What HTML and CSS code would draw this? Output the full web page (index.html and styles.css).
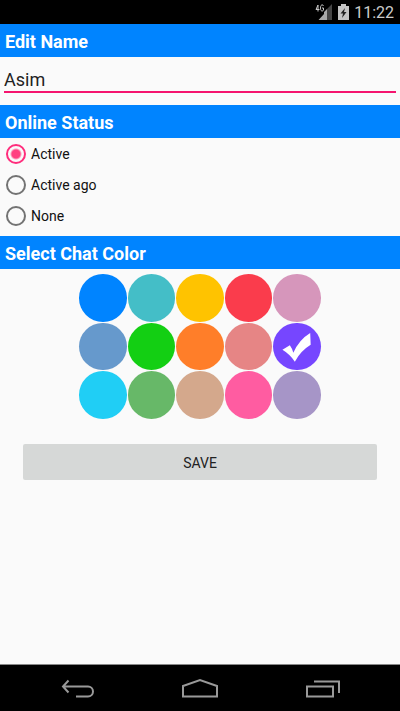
FILE: index.html
```html
<!DOCTYPE html>
<html lang="en">
<head>
<meta charset="utf-8">
<meta name="viewport" content="width=device-width, initial-scale=1">
<title>Chat settings</title>
<link rel="stylesheet" href="styles.css">
</head>
<body>
<header class="status-bar">
  <svg class="signal" width="18" height="16" viewBox="0 0 18 16" role="img" aria-label="4G signal">
    <path d="M17 0V16H12V5Z" fill="#454545"/>
    <path d="M12 5V16H3.500L9 10V8Z" fill="#a8a8a8"/>
    <path d="M3 7.500V1L1 5.500H4.500M8.500 2C8 .3 5.500.2 5.500 4S8 7.500 8.500 6V4H7" fill="none" stroke="#c8c8c8"/>
  </svg>
  <svg class="battery" width="11" height="16" viewBox="0 0 11 16" role="img" aria-label="Battery charging">
    <path d="M3 0H8V2H11V16H0V2H3Z" fill="#c4c4c4"/>
    <path d="M7 4L2.500 9.500H5L4 14L8.500 8H6Z" fill="#222"/>
  </svg>
  <time class="clock">11:22</time>
</header>
<main class="content">
  <form class="settings">
    <h2 class="section-title"><label for="name">Edit Name</label></h2>
    <div class="name-field">
      <input class="name-input" id="name" type="text" value="Asim">
    </div>
    <h2 class="section-title" id="status-title">Online Status</h2>
    <div class="status-options" role="radiogroup" aria-labelledby="status-title">
      <label class="option"><input class="radio" type="radio" name="status" checked><span class="option-text">Active</span></label>
      <label class="option"><input class="radio" type="radio" name="status"><span class="option-text">Active ago</span></label>
      <label class="option"><input class="radio" type="radio" name="status"><span class="option-text">None</span></label>
    </div>
    <h2 class="section-title" id="color-title">Select Chat Color</h2>
    <div class="palette" role="radiogroup" aria-labelledby="color-title">
      <input class="swatch blue" type="radio" name="color" aria-label="Blue">
      <input class="swatch teal" type="radio" name="color" aria-label="Teal">
      <input class="swatch yellow" type="radio" name="color" aria-label="Yellow">
      <input class="swatch red" type="radio" name="color" aria-label="Red">
      <input class="swatch orchid" type="radio" name="color" aria-label="Orchid">
      <input class="swatch steel" type="radio" name="color" aria-label="Steel blue">
      <input class="swatch green" type="radio" name="color" aria-label="Green">
      <input class="swatch orange" type="radio" name="color" aria-label="Orange">
      <input class="swatch coral" type="radio" name="color" aria-label="Coral">
      <span class="picked">
        <input class="swatch violet" type="radio" name="color" aria-label="Violet" checked>
        <svg class="tick" viewBox="0 0 48 48" aria-hidden="true"><path d="M9.500 27L17 22.500Q19.500 26 20.500 30Q26 17 37.500 10L38 22Q28 28 22 39Q17 31.500 9.500 27Z" fill="#fff"/></svg>
      </span>
      <input class="swatch cyan" type="radio" name="color" aria-label="Cyan">
      <input class="swatch sage" type="radio" name="color" aria-label="Sage">
      <input class="swatch tan" type="radio" name="color" aria-label="Tan">
      <input class="swatch pink" type="radio" name="color" aria-label="Pink">
      <input class="swatch lavender" type="radio" name="color" aria-label="Lavender">
    </div>
    <button class="save" type="button">SAVE</button>
  </form>
</main>
<nav class="nav-bar">
  <button class="nav-button" type="button" aria-label="Back">
    <svg width="36" height="22" viewBox="0 0 36 22"><path d="M8.500 3.500L3 9.500L8.500 15.500M3 9.500H28A4.900 4.900 0 0 1 28 19.500H16"/></svg>
  </button>
  <button class="nav-button" type="button" aria-label="Home">
    <svg width="36" height="22" viewBox="0 0 36 22"><path d="M1 19.500V9L18 3L35 9V19.500Z"/></svg>
  </button>
  <button class="nav-button" type="button" aria-label="Recent apps">
    <svg width="36" height="22" viewBox="0 0 36 22"><path d="M3 9.500H29V19.500H3ZM10 4.500H35V16"/></svg>
  </button>
</nav>
</body>
</html>
```
FILE: styles.css
```css
* {
  box-sizing: border-box;
}

body {
  margin: 0;
  min-height: 100vh;
  display: flex;
  flex-direction: column;
  background: #fafafa;
  color: #111;
  font-family: Roboto, "Liberation Sans", sans-serif;
}

.status-bar {
  height: 24px;
  padding: 0 6px;
  display: flex;
  align-items: center;
  justify-content: flex-end;
  gap: 5px;
  background: #000;
}

.clock {
  padding-top: 2px;
  color: #ccc;
  font-size: 16px;
  line-height: 22px;
}

.content {
  flex: 1;
}

.settings {
  display: flex;
  flex-direction: column;
}

.section-title {
  margin: 0;
  padding: 2px 5px 0;
  background: #0084ff;
  color: #fff;
  font-size: 18px;
  font-weight: 700;
  line-height: 31px;
}

.name-field {
  padding: 8px 4px 12px;
}

.name-input {
  display: block;
  width: 100%;
  height: 28px;
  padding: 2px 0 0;
  border: 0;
  border-bottom: 2px solid #f5146e;
  outline: 0;
  background: transparent;
  color: #222;
  font-family: inherit;
  font-size: 18px;
}

.status-options {
  padding-bottom: 5px;
}

.option {
  display: flex;
  align-items: center;
  gap: 5px;
  padding-left: 6px;
  font-size: 14px;
}

.option-text {
  padding-top: 2px;
  line-height: 29px;
}

.radio {
  appearance: none;
  width: 20px;
  height: 20px;
  margin: 0;
  border: 2px solid #737373;
  border-radius: 50%;
}

.radio:checked {
  border-color: #ff2d7c;
  background: radial-gradient(circle, #ff4081 4px, transparent 6px);
}

.palette {
  align-self: center;
  width: 61%;
  padding: 5px 1px 0;
  display: grid;
  grid-template-columns: repeat(5, 1fr);
  gap: 1px;
}

.swatch {
  appearance: none;
  display: block;
  width: 100%;
  aspect-ratio: 1;
  margin: 0;
  border-radius: 50%;
}

.picked {
  position: relative;
}

.tick {
  position: absolute;
  inset: 0;
  pointer-events: none;
}

.blue { background: #0084ff; }
.teal { background: #44bec7; }
.yellow { background: #ffc300; }
.red { background: #fa3c4c; }
.orchid { background: #d696bb; }
.steel { background: #6699cc; }
.green { background: #13cf13; }
.orange { background: #ff7e29; }
.coral { background: #e68585; }
.violet { background: #7646ff; }
.cyan { background: #20cef5; }
.sage { background: #67b868; }
.tan { background: #d4a88c; }
.pink { background: #ff5ca1; }
.lavender { background: #a695c7; }

.save {
  height: 36px;
  margin: 25px 23px 0;
  padding: 2px 0 0;
  border: 0;
  border-radius: 2px;
  background: #d6d8d7;
  color: #222;
  font-family: inherit;
  font-size: 14px;
}

.nav-bar {
  height: 47px;
  padding: 0 17px;
  display: grid;
  grid-template-columns: repeat(3, 1fr);
  border-top: 1px solid #888;
  background: #000;
}

.nav-button {
  display: grid;
  place-items: center;
  padding: 0;
  border: 0;
  background: transparent;
}

.nav-button svg {
  fill: none;
  stroke: #999;
  stroke-width: 2;
}
```
